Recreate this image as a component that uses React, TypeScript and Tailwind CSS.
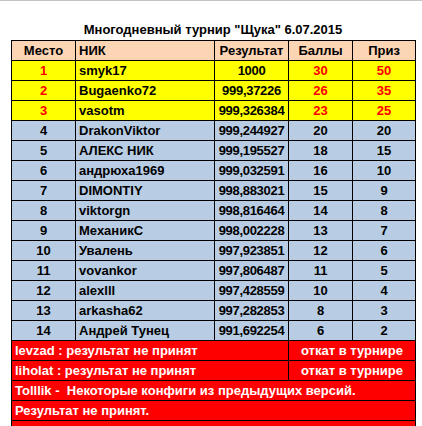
const rows = [
  { place: "1", nick: "smyk17", result: "1000", score: "30", prize: "50", top: true },
  { place: "2", nick: "Bugaenko72", result: "999,37226", score: "26", prize: "35", top: true },
  { place: "3", nick: "vasotm", result: "999,326384", score: "23", prize: "25", top: true },
  { place: "4", nick: "DrakonViktor", result: "999,244927", score: "20", prize: "20" },
  { place: "5", nick: "АЛЕКС НИК", result: "999,195527", score: "18", prize: "15" },
  { place: "6", nick: "андрюха1969", result: "999,032591", score: "16", prize: "10" },
  { place: "7", nick: "DIMONTIY", result: "998,883021", score: "15", prize: "9" },
  { place: "8", nick: "viktorgn", result: "998,816464", score: "14", prize: "8" },
  { place: "9", nick: "МеханикС", result: "998,002228", score: "13", prize: "7" },
  { place: "10", nick: "Увалень", result: "997,923851", score: "12", prize: "6" },
  { place: "11", nick: "vovankor", result: "997,806487", score: "11", prize: "5" },
  { place: "12", nick: "alexlll", result: "997,428559", score: "10", prize: "4" },
  { place: "13", nick: "arkasha62", result: "997,282853", score: "8", prize: "3" },
  { place: "14", nick: "Андрей Тунец", result: "991,692254", score: "6", prize: "2" },
];

const cell = "border border-black h-[20px] p-0 leading-[18px] align-middle";

export default function App() {
  return (
    <div className="w-[422px] h-[426px] bg-white overflow-hidden border-t border-[#c4c4c4] font-['Liberation_Sans',Arial,sans-serif] font-bold text-[13px] text-black">
      <div className="ml-[11px] w-[404px] h-[39px] flex items-end justify-center pb-[1px] text-[13px]">
        Многодневный турнир "Щука" 6.07.2015
      </div>

      <table className="ml-[11px] w-[404px] table-fixed border-collapse">
        <colgroup>
          <col className="w-[64px]" />
          <col className="w-[139px]" />
          <col className="w-[74px]" />
          <col className="w-[64px]" />
          <col className="w-[63px]" />
        </colgroup>
        <thead>
          <tr className="bg-[#fcd5b4]">
            <th className={`${cell} text-center font-bold`}>Место</th>
            <th className={`${cell} text-left pl-[3px] font-bold`}>НИК</th>
            <th className={`${cell} text-center font-bold`}>Результат</th>
            <th className={`${cell} text-center font-bold`}>Баллы</th>
            <th className={`${cell} text-center font-bold`}>Приз</th>
          </tr>
        </thead>
        <tbody>
          {rows.map((r) => (
            <tr key={r.place} className={r.top ? "bg-[#ffff00]" : "bg-[#b8cce4]"}>
              <td className={`${cell} text-center ${r.top ? "text-[#ff0000]" : ""}`}>{r.place}</td>
              <td className={`${cell} text-left pl-[3px] whitespace-nowrap`}>{r.nick}</td>
              <td className={`${cell} text-center tracking-[-0.3px] whitespace-nowrap`}>{r.result}</td>
              <td className={`${cell} text-center ${r.top ? "text-[#ff0000]" : ""}`}>{r.score}</td>
              <td className={`${cell} text-center ${r.top ? "text-[#ff0000]" : ""}`}>{r.prize}</td>
            </tr>
          ))}

          {/* disqualified */}
          {["levzad", "liholat"].map((n) => (
            <tr key={n} className="bg-[#ff0000] text-white">
              <td colSpan={3} className={`${cell} text-left pl-[3px]`}>{n} : результат не принят</td>
              <td colSpan={2} className={`${cell} text-center`}>откат в турнире</td>
            </tr>
          ))}
          <tr className="bg-[#ff0000] text-white">
            <td colSpan={5} className={`${cell} text-left pl-[3px] whitespace-pre`}>Tolllik -  Некоторые конфиги из предыдущих версий.</td>
          </tr>
          <tr className="bg-[#ff0000] text-white">
            <td colSpan={5} className={`${cell} text-left pl-[3px]`}>Результат не принят.</td>
          </tr>
          <tr className="bg-[#ff0000]">
            <td colSpan={5} className={cell}></td>
          </tr>
        </tbody>
      </table>
    </div>
  );
}
